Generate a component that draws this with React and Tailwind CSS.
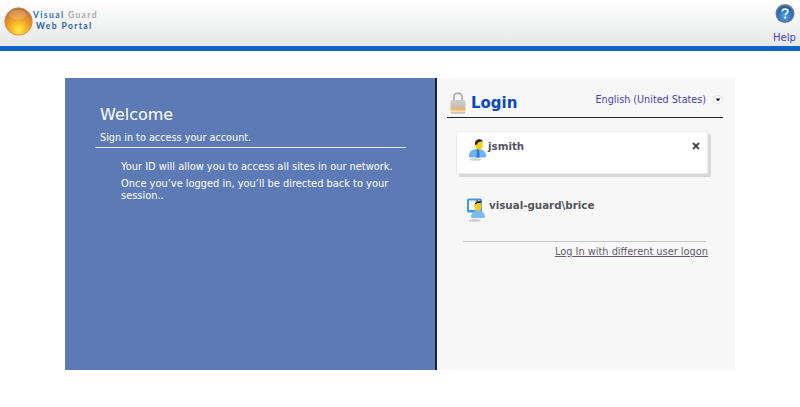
import React from 'react';

const font = { fontFamily: '"DejaVu Sans", Verdana, sans-serif' };

const LogoBall = () => (
    <svg width="29" height="29" viewBox="0 0 30 30">
        <defs>
            <radialGradient id="ball" cx="50%" cy="80%" r="75%">
                <stop offset="0%" stopColor="#fff04a" />
                <stop offset="40%" stopColor="#f9b026" />
                <stop offset="80%" stopColor="#d9822f" />
                <stop offset="100%" stopColor="#b8753f" />
            </radialGradient>
        </defs>
        <circle cx="15" cy="15" r="14.200" fill="url(#ball)" stroke="#c98a4a" strokeWidth="0.8" />
        <ellipse cx="14" cy="8" rx="9" ry="5" fill="#fff" opacity="0.18" />
    </svg>
);

const HelpIcon = () => (
    <svg width="20" height="24" viewBox="0 0 20 24">
        <defs>
            <radialGradient id="help" cx="50%" cy="65%" r="60%">
                <stop offset="0%" stopColor="#5aa4e8" />
                <stop offset="100%" stopColor="#1d5fa8" />
            </radialGradient>
        </defs>
        <circle cx="10" cy="12.500" r="9.500" fill="#6b7b8c" />
        <circle cx="10" cy="13" r="8" fill="url(#help)" />
        <path d="M7.200 10.600c0-1.700 1.300-2.600 2.900-2.600s2.800 .9 2.800 2.300c0 1.200-.8 1.800-1.600 2.300-.7 .5-1 .8-1 1.600" fill="none" stroke="#fff" strokeWidth="1.600" />
        <circle cx="10.200" cy="16.600" r="1.100" fill="#fff" />
    </svg>
);

const LockIcon = () => (
    <svg width="16" height="22" viewBox="0 0 16 22">
        <defs>
            <linearGradient id="lock" x1="0" y1="0" x2="0" y2="1">
                <stop offset="0%" stopColor="#cfcfcf" />
                <stop offset="50%" stopColor="#c4c0bb" />
                <stop offset="68%" stopColor="#f5b04a" />
                <stop offset="85%" stopColor="#f3e3c0" />
                <stop offset="100%" stopColor="#a9a9a9" />
            </linearGradient>
        </defs>
        <path d="M4 9V5C4 2.300 5.500 1.200 8 1.200s4 1.100 4 3.800V9" fill="none" stroke="#b5b5b5" strokeWidth="2" />
        <rect x="0.500" y="8" width="15" height="13.500" rx="1.500" fill="url(#lock)" />
    </svg>
);

const UserIcon = () => (
    <svg width="17" height="22" viewBox="0 0 17 22">
        <ellipse cx="6.500" cy="20.500" rx="6" ry="1.300" fill="#bbb" opacity="0.7" />
        <path d="M0 17c0-4.500 3-7 8.500-7s8.500 2.500 8.500 7c0 1-.8 1.500-2 1.500H2c-1.200 0-2-.5-2-1.500z" fill="#6db3ee" />
        <path d="M8 10h2l.6 8.500H7.400z" fill="#2f78c4" />
        <ellipse cx="10" cy="5.800" rx="3.800" ry="5" fill="#f5cf17" />
        <path d="M6.200 6C5.500 2.500 7.500 .3 10.500 .3c2 0 3.300 1 3.300 2.400-2.300-.5-4.300 0-5.300 1.500-.5 1-1.300 1.800-2.300 1.800z" fill="#222" />
    </svg>
);

const MonitorUserIcon = () => (
    <svg width="18" height="24" viewBox="0 0 18 24">
        <ellipse cx="7.500" cy="22.500" rx="6" ry="1.400" fill="#bbb" opacity="0.7" />
        <rect x="0" y="0.500" width="15" height="14" rx="1.500" fill="#3f9be0" />
        <rect x="2" y="2.500" width="11" height="9.500" fill="#f4f9fd" />
        <path d="M4 19c0-4 2.800-6.500 7-6.500s7 2.500 7 6.500c0 .8-.8 1-1.500 1h-11c-.7 0-1.500-.2-1.500-1z" fill="#7dbcf0" />
        <ellipse cx="11" cy="8.300" rx="3.400" ry="4.600" fill="#f5cf17" />
        <path d="M7.500 6.800c.5-3 3-4.300 7-3.800l-1.500 2c-2 0-3 .2-5.500 1.800z" fill="#222" />
        <path d="M8 3.500l2.500-1.700 1 1.700z" fill="#c0392b" />
    </svg>
);

export default function App() {
    return (
        <div className="w-[800px] h-[407px] bg-white overflow-hidden" style={font}>
            {/* Header */}
            <div className="h-[46px] flex justify-between bg-gradient-to-b from-white to-[#e6e7e7]">
                <div className="flex items-start pl-[4px] pt-[7px]">
                    <LogoBall />
                    <div className="pt-[3px] text-[8.500px] leading-[11px] font-['Lato'] tracking-[1.400px] font-bold">
                        <div className="text-[#2a6fb8]">Visual <span className="text-[#a9a9a9]">Guard</span></div>
                        <div className="pl-[3px] text-[#1f5fa8]">Web Portal</div>
                    </div>
                </div>
                <div className="w-[31px] flex flex-col items-center pt-[1px]">
                    <HelpIcon />
                    <a className="text-[10px] leading-[12px] mt-[7px] text-[#4a3fc0]">Help</a>
                </div>
            </div>
            <div className="h-[5px] bg-[#0f62c6]" />

            {/* Main panel */}
            <div className="w-[670px] h-[292px] ml-[65px] mt-[27px] flex">
                <div className="w-[370px] bg-[#5c7bb6] pl-[30px] pr-[29px] pt-[27px] text-white">
                    <h1 className="text-[16px] leading-[19px] pl-[5px] font-normal">Welcome</h1>
                    <p className="text-[9.700px] leading-[12px] pl-[5px] mt-[8px] pb-[3px] border-b border-[#dfe6f5]">Sign in to access your account.</p>
                    <div className="pl-[26px] text-[9.850px] leading-[12px]">
                        <p className="mt-[13px]">Your ID will allow you to access all sites in our network.</p>
                        <p className="mt-[5px]">Once you’ve logged in, you’ll be directed back to your session..</p>
                    </div>
                </div>
                <div className="w-[2px] bg-[#1c2433]" />
                <div className="flex-1 bg-[#f7f7f8] pl-[10px] pr-[12px] pt-[12px]">
                    <div className="h-[28px] border-b border-[#222] flex justify-between">
                        <div className="flex items-start pl-[3px] pt-[2px]">
                            <LockIcon />
                            <span className="ml-[5px] text-[15px] leading-[22px] font-bold text-[#0c46c0]">Login</span>
                        </div>
                        <div className="flex items-start pt-[3px]">
                            <span className="mt-[1px] text-[9.650px] leading-[12px] text-[#4a3fb0]">English (United States)</span>
                            <span className="ml-[7px] mt-[2px] w-[10px] h-[9px] rounded-full bg-white border border-[#e4e4e4] flex items-center justify-center">
                                <svg width="6" height="4" viewBox="0 0 7 5"><path d="M.5 .5h6L3.500 4.500z" fill="#111" /></svg>
                            </span>
                        </div>
                    </div>

                    {/* Saved accounts */}
                    <div className="ml-[9px] mt-[13px] w-[252px] h-[43px] bg-white border border-[#ececec] shadow-[3px_3px_0_#d8d8d8] flex items-start pt-[7px] pl-[12px] pr-[7px]">
                        <UserIcon />
                        <span className="ml-[2px] text-[10.300px] leading-[14px] font-bold text-[#55555f]">jsmith</span>
                        <svg className="ml-auto mt-[3px]" width="8" height="8" viewBox="0 0 8 8"><path d="M1 1l6 6M7 1L1 7" stroke="#444" strokeWidth="1.800" /></svg>
                    </div>
                    <div className="ml-[20px] mt-[24px] flex items-start">
                        <MonitorUserIcon />
                        <span className="ml-[4px] text-[10.300px] leading-[14px] font-bold text-[#55555f]">visual-guard\brice</span>
                    </div>

                    <div className="ml-[16px] mt-[19px] w-[243px] h-px bg-[#c4c4c4]" />
                    <div className="w-[261px] mt-[4px] text-right text-[9.800px] leading-[12px]">
                        <a className="underline text-[#6a5a70]">Log In with different user logon</a>
                    </div>
                </div>
            </div>
        </div>
    );
}
